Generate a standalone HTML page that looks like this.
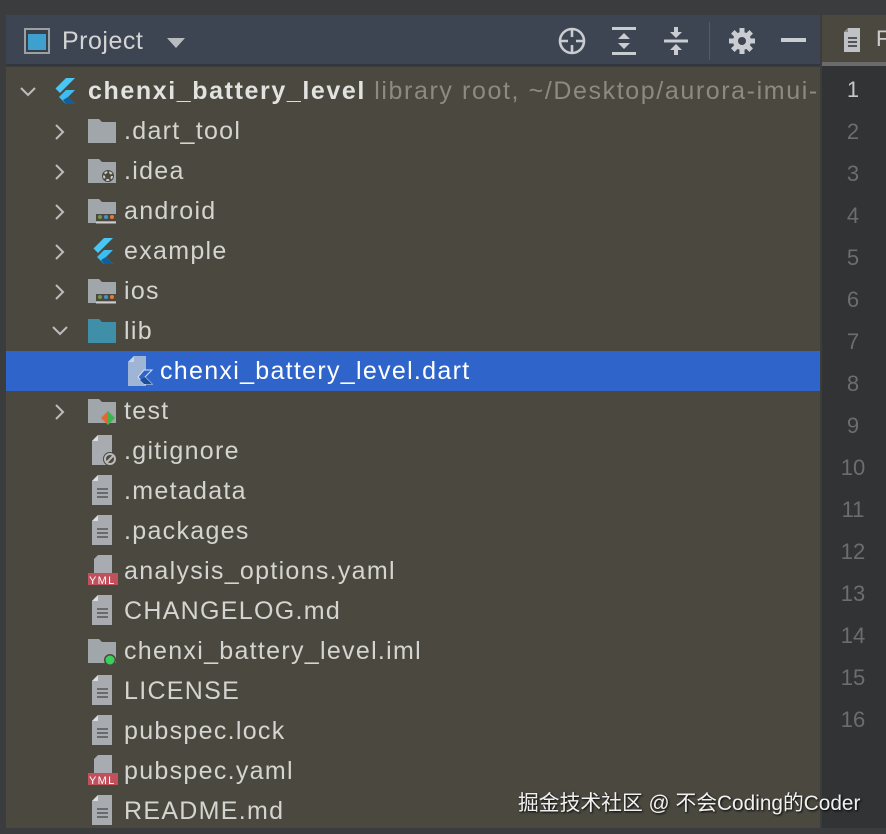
<!DOCTYPE html>
<html><head><meta charset="utf-8"><style>
*{margin:0;padding:0;box-sizing:border-box}
body{width:886px;height:834px;background:#3b3c3e;position:relative;overflow:hidden;font-family:"Liberation Sans","Noto Sans CJK SC",sans-serif}
.hdr{position:absolute;left:6px;top:15px;width:814px;height:51px;background:#3d4553;border-bottom:2px solid #33363a}
.tree{position:absolute;left:6px;top:67px;width:814px;height:761px;background:#4b493f}
.gut{position:absolute;left:822px;top:66px;width:64px;height:762px;background:#313335}
.tab{position:absolute;left:822px;top:15px;width:64px;height:51px;background:#4b493f;border-bottom:4px solid #6b6b6b}
.row{position:absolute;left:6px;width:814px;height:40px;color:#d4d4d0;font-size:25px;letter-spacing:1.3px;line-height:40px;white-space:nowrap;overflow:hidden}
.row span.t{position:absolute;top:0}
.arr{position:absolute;top:12px}
.ic{position:absolute;top:6px}
.sel{background:#2f65ca;color:#fff}
.ln{position:absolute;left:822px;width:62px;text-align:center;color:#6b6d70;font-size:22px}
.wm{position:absolute;left:518px;top:786px;color:#f0f0f0;font-size:20.8px;text-shadow:1px 1px 2px #000}
</style></head><body>
<div class="hdr"></div>
<div class="tab"></div>
<svg style="position:absolute;left:842px;top:26px" width="22" height="28"><path d="M6 2h12v24H2V6z" fill="#bfc2c5"/><path d="M6 2v4H2" fill="#888"/><path d="M6 12h9M6 16h9M6 20h9" stroke="#555" stroke-width="2"/></svg>
<div style="position:absolute;left:876px;top:26px;color:#ccc;font-size:22px">F</div>
<svg style="position:absolute;left:24px;top:28px" width="26" height="26"><rect x="1" y="1" width="24" height="24" fill="#3a3f48" stroke="#9aa0a6" stroke-width="2"/><rect x="4" y="6" width="18" height="16" fill="#3da0cf"/></svg>
<div style="position:absolute;left:62px;top:24px;color:#d4d4d4;font-size:25px;letter-spacing:0.5px;line-height:34px">Project</div>
<svg style="position:absolute;left:166px;top:37px" width="20" height="12"><path d="M1 1h18L10 11z" fill="#b8bcc0"/></svg>
<svg style="position:absolute;left:557px;top:26px" width="30" height="30" fill="none" stroke="#c9ccd0" stroke-width="2.6"><circle cx="15" cy="15" r="12"/><path d="M15 3v8M15 19v8M3 15h8M19 15h8"/></svg>
<svg style="position:absolute;left:610px;top:26px" width="28" height="30" fill="#c9ccd0"><rect x="2" y="1" width="24" height="3"/><rect x="2" y="26" width="24" height="3"/><path d="M14 7l6 6H8zM14 23l6-6H8z"/></svg>
<svg style="position:absolute;left:662px;top:26px" width="28" height="30" fill="#c9ccd0"><rect x="2" y="13.5" width="24" height="3"/><path d="M14 12l-6-6h12zM14 18l6 6H8z"/><rect x="12" y="1" width="4" height="5"/><rect x="12" y="24" width="4" height="5"/></svg>
<div style="position:absolute;left:709px;top:22px;width:1px;height:38px;background:#555c66"></div>
<svg style="position:absolute;left:728px;top:27px" width="28" height="28"><g fill="#c9ccd0"><circle cx="14" cy="14" r="9"/><g stroke="#c9ccd0" stroke-width="5"><path d="M14 1v26M1 14h26M4.8 4.8l18.4 18.4M23.2 4.8L4.8 23.2"/></g></g><circle cx="14" cy="14" r="4" fill="#3d4553"/></svg>
<div style="position:absolute;left:781px;top:38px;width:25px;height:4px;background:#c9ccd0"></div>
<div class="tree"></div>
<div class="gut"></div>

<div class="row" style="top:71px"><svg class="arr" style="left:12px" width="20" height="16"><path d="M3 5l7 7 7-7" fill="none" stroke="#bdbdbd" stroke-width="2"/></svg>
<svg class="ic" style="left:46px" width="26" height="28"><path d="M14 1h9L8 16 3.5 11.5z" fill="#48c6f4"/><path d="M14 13h9l-7 7 7 7h-9l-7-7z" fill="#3ebdf0"/><path d="M11 23l5-3 7 7h-9z" fill="#0f5f9f"/></svg>
<span class="t" style="left:82px"><b style="color:#e2e2e0;letter-spacing:1.6px">chenxi_battery_level</b> <span style="color:#8d8b80;letter-spacing:1.6px">library root, ~/Desktop/aurora-imui-</span></span></div>

<div class="row" style="top:111px"><svg class="arr" style="left:46px" width="16" height="18"><path d="M4 2l7 7-7 7" fill="none" stroke="#bdbdbd" stroke-width="2"/></svg><svg class="ic" style="left:82px;top:8px" width="28" height="24"><path d="M0 0h11l3 3h14v21H0z" fill="#a1a6ab"/></svg><span class="t" style="left:118px">.dart_tool</span></div>
<div class="row" style="top:151px"><svg class="arr" style="left:46px" width="16" height="18"><path d="M4 2l7 7-7 7" fill="none" stroke="#bdbdbd" stroke-width="2"/></svg><svg class="ic" style="left:82px;top:8px" width="28" height="26"><path d="M0 0h11l3 3h14v21H0z" fill="#a1a6ab"/><circle cx="20" cy="17" r="6" fill="#4b493f"/><circle cx="20" cy="17" r="4" fill="none" stroke="#ccc" stroke-width="2" stroke-dasharray="3 2"/></svg><span class="t" style="left:118px">.idea</span></div>
<div class="row" style="top:191px"><svg class="arr" style="left:46px" width="16" height="18"><path d="M4 2l7 7-7 7" fill="none" stroke="#bdbdbd" stroke-width="2"/></svg><svg class="ic" style="left:82px;top:8px" width="30" height="28"><path d="M0 0h11l3 3h14v21H0z" fill="#a1a6ab"/><rect x="8" y="15" width="20" height="7" fill="#4b493f"/><circle cx="12" cy="18" r="2" fill="#6a9a44"/><circle cx="18" cy="18" r="2" fill="#4a8fd0"/><circle cx="24" cy="18" r="2" fill="#e07b39"/><rect x="8" y="23" width="20" height="1.5" fill="#ccc"/></svg><span class="t" style="left:118px">android</span></div>
<div class="row" style="top:231px"><svg class="arr" style="left:46px" width="16" height="18"><path d="M4 2l7 7-7 7" fill="none" stroke="#bdbdbd" stroke-width="2"/></svg><svg class="ic" style="left:84px" width="26" height="28"><path d="M14 1h9L8 16 3.5 11.5z" fill="#48c6f4"/><path d="M14 13h9l-7 7 7 7h-9l-7-7z" fill="#3ebdf0"/><path d="M11 23l5-3 7 7h-9z" fill="#0f5f9f"/></svg><span class="t" style="left:118px">example</span></div>
<div class="row" style="top:271px"><svg class="arr" style="left:46px" width="16" height="18"><path d="M4 2l7 7-7 7" fill="none" stroke="#bdbdbd" stroke-width="2"/></svg><svg class="ic" style="left:82px;top:8px" width="30" height="28"><path d="M0 0h11l3 3h14v21H0z" fill="#a1a6ab"/><rect x="8" y="15" width="20" height="7" fill="#4b493f"/><circle cx="12" cy="18" r="2" fill="#6a9a44"/><circle cx="18" cy="18" r="2" fill="#4a8fd0"/><circle cx="24" cy="18" r="2" fill="#e07b39"/><rect x="8" y="23" width="20" height="1.5" fill="#ccc"/></svg><span class="t" style="left:118px">ios</span></div>
<div class="row" style="top:311px"><svg class="arr" style="left:44px" width="20" height="16"><path d="M3 4l7 7 7-7" fill="none" stroke="#bdbdbd" stroke-width="2"/></svg><svg class="ic" style="left:82px;top:8px" width="28" height="24"><path d="M0 0h11l3 3h14v21H0z" fill="#3f8fa8"/></svg><span class="t" style="left:118px">lib</span></div>
<div class="row sel" style="top:351px"><svg class="ic" style="left:122px;top:5px" width="26" height="32"><path d="M6 0h12v30H0V6z" fill="#9fb5d6"/><path d="M6 0v6H0" fill="#c8d3e6"/><path d="M16 14h8l-7 7 7 7h-8l-6-7z" fill="#2f65ca" stroke="#dde" stroke-width="1"/><path d="M12 24l5-3 7 7h-8z" fill="#1a4f9a"/></svg><span class="t" style="left:154px">chenxi_battery_level.dart</span></div>
<div class="row" style="top:391px"><svg class="arr" style="left:46px" width="16" height="18"><path d="M4 2l7 7-7 7" fill="none" stroke="#bdbdbd" stroke-width="2"/></svg><svg class="ic" style="left:82px;top:8px" width="30" height="28"><path d="M0 0h11l3 3h14v21H0z" fill="#a1a6ab"/><path d="M20 12l-7 7 7 7z" fill="#e6662e"/><path d="M20 12l7 7-7 7z" fill="#3fb34f"/></svg><span class="t" style="left:118px">test</span></div>

<div class="row" style="top:431px"><svg class="ic" style="left:84px;top:4px" width="30" height="32"><path d="M8 0h14v30H2V6z" fill="#a8abaf"/><path d="M8 0v6H2" fill="#ddd"/><circle cx="20" cy="24" r="7" fill="#4b493f"/><circle cx="20" cy="24" r="5" fill="none" stroke="#bbb" stroke-width="2"/><path d="M17 27l6-6" stroke="#bbb" stroke-width="2"/></svg><span class="t" style="left:118px">.gitignore</span></div>
<div class="row" style="top:471px"><svg class="ic" style="left:84px;top:4px" width="26" height="32"><path d="M8 0h14v30H2V6z" fill="#a8abaf"/><path d="M8 0v6H2" fill="#ddd"/><path d="M7 14h11M7 18h11M7 22h11" stroke="#555" stroke-width="1.6"/></svg><span class="t" style="left:118px">.metadata</span></div>
<div class="row" style="top:511px"><svg class="ic" style="left:84px;top:4px" width="26" height="32"><path d="M8 0h14v30H2V6z" fill="#a8abaf"/><path d="M8 0v6H2" fill="#ddd"/><path d="M7 14h11M7 18h11M7 22h11" stroke="#555" stroke-width="1.6"/></svg><span class="t" style="left:118px">.packages</span></div>
<div class="row" style="top:551px"><svg class="ic" style="left:82px;top:4px" width="32" height="32"><path d="M10 0h14v18H6V4z" fill="#a8abaf"/><rect x="0" y="18" width="30" height="12" fill="#c0505c"/><text x="1" y="29" font-size="11" fill="#fff" font-family="Liberation Sans">YML</text></svg><span class="t" style="left:118px">analysis_options.yaml</span></div>
<div class="row" style="top:591px"><svg class="ic" style="left:84px;top:4px" width="26" height="32"><path d="M8 0h14v30H2V6z" fill="#a8abaf"/><path d="M8 0v6H2" fill="#ddd"/><path d="M7 14h11M7 18h11M7 22h11" stroke="#555" stroke-width="1.6"/></svg><span class="t" style="left:118px">CHANGELOG.md</span></div>
<div class="row" style="top:631px"><svg class="ic" style="left:82px;top:8px" width="30" height="28"><path d="M0 0h11l3 3h14v21H0z" fill="#a1a6ab"/><circle cx="22" cy="21" r="6" fill="#4b493f"/><circle cx="22" cy="21" r="4.5" fill="#39d05e"/></svg><span class="t" style="left:118px">chenxi_battery_level.iml</span></div>
<div class="row" style="top:671px"><svg class="ic" style="left:84px;top:4px" width="26" height="32"><path d="M8 0h14v30H2V6z" fill="#a8abaf"/><path d="M8 0v6H2" fill="#ddd"/><path d="M7 14h11M7 18h11M7 22h11" stroke="#555" stroke-width="1.6"/></svg><span class="t" style="left:118px">LICENSE</span></div>
<div class="row" style="top:711px"><svg class="ic" style="left:84px;top:4px" width="26" height="32"><path d="M8 0h14v30H2V6z" fill="#a8abaf"/><path d="M8 0v6H2" fill="#ddd"/><path d="M7 14h11M7 18h11M7 22h11" stroke="#555" stroke-width="1.6"/></svg><span class="t" style="left:118px">pubspec.lock</span></div>
<div class="row" style="top:751px"><svg class="ic" style="left:82px;top:4px" width="32" height="32"><path d="M10 0h14v18H6V4z" fill="#a8abaf"/><rect x="0" y="18" width="30" height="12" fill="#c0505c"/><text x="1" y="29" font-size="11" fill="#fff" font-family="Liberation Sans">YML</text></svg><span class="t" style="left:118px">pubspec.yaml</span></div>
<div class="row" style="top:791px"><svg class="ic" style="left:84px;top:4px" width="26" height="32"><path d="M8 0h14v30H2V6z" fill="#a8abaf"/><path d="M8 0v6H2" fill="#ddd"/><path d="M7 14h11M7 18h11M7 22h11" stroke="#555" stroke-width="1.6"/></svg><span class="t" style="left:118px">README.md</span></div>

<div class="ln" style="top:77px;color:#c8c8c8">1</div>
<div class="ln" style="top:119px">2</div><div class="ln" style="top:161px">3</div><div class="ln" style="top:203px">4</div><div class="ln" style="top:245px">5</div><div class="ln" style="top:287px">6</div><div class="ln" style="top:329px">7</div><div class="ln" style="top:371px">8</div><div class="ln" style="top:413px">9</div><div class="ln" style="top:455px">10</div><div class="ln" style="top:497px">11</div><div class="ln" style="top:539px">12</div><div class="ln" style="top:581px">13</div><div class="ln" style="top:623px">14</div><div class="ln" style="top:665px">15</div><div class="ln" style="top:707px">16</div>
<div class="wm">掘金技术社区 @ 不会Coding的Coder</div>
</body></html>
